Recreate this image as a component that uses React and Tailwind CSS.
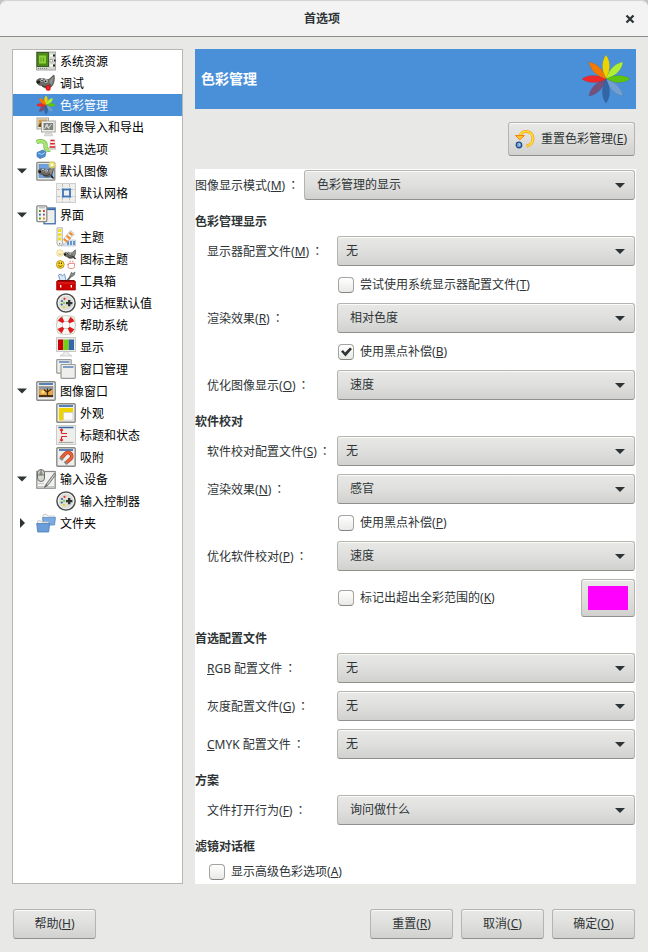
import React from "react";

/* ---------- icons ---------- */

const PETALS = [
  [0, "#edd400"],
  [45, "#b0ee34"],
  [90, "#5fc40c"],
  [135, "#729fcf"],
  [180, "#3465a4"],
  [225, "#75507b"],
  [270, "#ef2929"],
  [315, "#f57900"],
];

function Flower({ className, petal = "M24 24C18.500 14 20 5 24 0C28 5 29.500 14 24 24Z" }) {
  return (
    <svg viewBox="0 0 48 48" className={className} aria-hidden="true">
      {PETALS.map(([angle, fill]) => (
        <path key={angle} d={petal} fill={fill} stroke="#000" strokeOpacity=".12" strokeWidth=".6" transform={`rotate(${angle} 24 24)`} />
      ))}
    </svg>
  );
}

function Wilber() {
  return (
    <g>
      <path d="M.5 8C1.500 5.500 3.500 6 4.500 5.500C5.500 6.500 6.500 6 7.500 5.500C9.500 7 12.500 7 14 5.500C15.500 4 16.500 3 18 2C19 6 18 11.500 15 14C12 16 8 15.500 5.500 12.500C3 12.500 .5 11 .5 8Z" fill="#6a6963" stroke="#3c3b37" strokeWidth=".6" />
      <path d="M13 8L17.300 3.500C18 6.500 17 10 15 12.500Z" fill="#8f8e88" />
      <path d="M6 12.500C9 14.500 12.500 13.500 14.500 11.500" fill="none" stroke="#33322f" strokeWidth="1" />
      <ellipse cx="2.400" cy="9" rx="1.800" ry="1.500" fill="#1c1c1a" />
      <circle cx="6" cy="7.300" r="1.600" fill="#fff" stroke="#444" strokeWidth=".4" />
      <circle cx="10" cy="8" r="1.900" fill="#fff" stroke="#444" strokeWidth=".4" />
      <circle cx="6" cy="7.500" r=".8" fill="#111" />
      <circle cx="9.800" cy="8.200" r=".9" fill="#111" />
    </g>
  );
}

function Controller() {
  return (
    <g>
      <circle cx="10" cy="10" r="9.100" fill="#deded9" stroke="#4a4d4e" strokeWidth="1.500" />
      <circle cx="10" cy="10" r="7.800" fill="none" stroke="#f4f4f2" strokeWidth=".8" />
      <path d="M12 7h2.400v2h2v2.300h-2v2H12v-2h-2V9h2Z" fill="#2e3436" />
      <circle cx="8.500" cy="5.800" r="1.100" fill="#ef2929" />
      <circle cx="6" cy="8" r="1.100" fill="#3465a4" />
      <circle cx="8" cy="10" r="1.100" fill="#73d216" />
      <circle cx="5.700" cy="11.500" r="1.100" fill="#3465a4" />
      <circle cx="8" cy="14" r="1.100" fill="#edd400" />
    </g>
  );
}

function Frame({ children }) {
  return (
    <g>
      <rect x=".8" y=".8" width="18.400" height="18.400" rx="1" fill="#eeeeec" stroke="#888a85" strokeWidth="1.400" />
      <path d="M3 3h14" stroke="#3465a4" strokeWidth="1.600" />
      {children}
    </g>
  );
}

const ICONS = {
  chip: (
    <g>
      <rect x=".5" y="1" width="19" height="18" fill="#d3d7cf" stroke="#a5a8a1" />
      <rect x="1" y="1.500" width="11.500" height="14" fill="#4e8a1a" stroke="#3b5a28" />
      <rect x="3" y="4.500" width="7" height="8" fill="#8bcf3c" />
      <path d="M5 6.500v4M7.500 6.500v4" stroke="#4e8a1a" strokeWidth=".8" />
      <path d="M2 17.500h10" stroke="#7d807a" strokeDasharray="1 1" />
      <rect x="14" y="8.500" width="2.500" height="2.500" fill="#fff" stroke="#777" strokeWidth=".5" />
      <path d="M17 4.500h2M17 14.500h2M18 9.500h1.500" stroke="#222" strokeWidth="2" />
      <path d="M14 4.500h3M14 14.500h3" stroke="#fff" strokeWidth="2" />
    </g>
  ),
  debug: (
    <g>
      <Wilber />
      <rect x="10.300" y="12.500" width="3.800" height="4.800" rx="1.200" fill="#ef2929" stroke="#c00" strokeWidth=".8" />
    </g>
  ),
  importExport: (
    <g>
      <rect x="1" y="1" width="11.500" height="11" fill="#e9e7e2" stroke="#a5a6a0" />
      <rect x="2.500" y="2.500" width="8.500" height="7.500" fill="#e09a33" />
      <path d="M2.500 8l3-3 3 2 2-1v4h-8Z" fill="#6b4a15" />
      <rect x="5.500" y="4" width="13.700" height="11" fill="#eeeeec" stroke="#a5a6a0" />
      <rect x="7.500" y="6" width="9.700" height="7" fill="#7e807b" />
      <path d="M8.500 12l2.500-5 1.500 4 3-4M9.500 8.500l4 3.500" stroke="#e8e8e6" strokeWidth=".9" fill="none" />
      <path d="M10 15.800h5l2 3H8Z" fill="#dfe0dd" stroke="#b5b5b3" strokeWidth=".5" />
    </g>
  ),
  toolOptions: (
    <g>
      <path d="M.5 3C6 1 10 3 9.500 6.500S11 11.500 14 10.500" fill="none" stroke="#6dbb3c" strokeWidth="4.200" />
      <path d="M.5 3C6 1 10 3 9.500 6.500S11 11.500 14 10.500" fill="none" stroke="#abe57a" strokeWidth="2.800" />
      <path d="M1 13.500l6-2.500 3 2-1 4.500-5 2-3-2Z" fill="#4a8fd0" stroke="#3a70ad" strokeWidth=".7" />
      <path d="M2 14l4 1.500 3-2" stroke="#b4d5f5" strokeWidth=".9" fill="none" />
      <path d="M14.500 1h4l1 7.500h-6Z" fill="#f4f4f2" stroke="#bbb" strokeWidth=".5" />
      <path d="M14.500 1.500h4M14.200 4.700h4.600M13.700 8h5.600" stroke="#dd2222" strokeWidth="1.500" />
      <rect x="13" y="9" width="7" height="2" fill="#d3d7cf" />
    </g>
  ),
  defaultImage: (
    <g>
      <rect x=".8" y="1.300" width="18" height="17.900" rx="1" fill="#e4e4e1" stroke="#888a85" strokeWidth="1.300" />
      <rect x="3" y="3.500" width="14" height="13" fill="#6fa1df" stroke="#4a80c4" strokeWidth=".6" />
      <g transform="translate(1.800 3) scale(.85)"><Wilber /></g>
      <path d="M15 14.500l2.500 3" stroke="#222" strokeWidth="1.600" />
      <circle cx="16" cy="4" r="3.400" fill="#fce94f" opacity=".75" />
      <circle cx="16" cy="4" r="1.600" fill="#fffde0" />
    </g>
  ),
  grid: (
    <g>
      <rect x=".5" y=".5" width="19" height="19" fill="#eeeeec" stroke="#cfd0cd" />
      <path d="M6.500 1v5M13.500 1v5M6.500 14v5M13.500 14v5M1 6.500h5M1 13.500h5M14 6.500h5M14 13.500h5" stroke="#c0c1be" strokeWidth="1" strokeDasharray="3 1" />
      <rect x="7" y="6.500" width="7" height="7" fill="#eeeeec" stroke="#3e74b8" strokeWidth="1.800" />
      <path d="M6 5.500h1.500M13.500 5.500H15M6 14.500h1.500M13.500 14.500H15" stroke="#729fcf" strokeWidth="1" />
    </g>
  ),
  interface: (
    <g>
      <rect x="8" y="3" width="11.200" height="15.800" fill="#eeeeec" stroke="#3465a4" strokeWidth="1.200" />
      <path d="M8 4.300h11" stroke="#3465a4" strokeWidth="1.600" />
      <rect x=".8" y=".8" width="10" height="15.800" rx="1" fill="#f3f3f1" stroke="#888a85" strokeWidth="1.300" />
      <path d="M3 2.800h6" stroke="#aaa" />
      <path d="M3 6h1.800M3 13.500h1.800" stroke="#4e9a06" strokeWidth="1.800" />
      <path d="M7 6h1.800" stroke="#ef2929" strokeWidth="1.800" />
      <path d="M3 9.700h1.800" stroke="#3465a4" strokeWidth="1.800" />
      <path d="M7 9.700h1.800" stroke="#75507b" strokeWidth="1.800" />
      <path d="M7 13.500h1.800" stroke="#f57900" strokeWidth="1.800" />
    </g>
  ),
  theme: (
    <g>
      <path d="M9 13h10.500v6H5Z" fill="#dfe9f5" stroke="#a7b6c8" strokeWidth=".6" />
      <path d="M12 14v4M15 14v4M18 14v4" stroke="#4a80c4" strokeWidth="1.600" />
      <path d="M6 14L14.500 3.500l4 3.500L7.500 18Z" fill="#f4f4f2" stroke="#aaa" strokeWidth=".7" />
      <path d="M8 12l3.500 3M10.800 8.800l3.500 3M13.500 5.700l3 2.500" stroke="#f08a30" strokeWidth="2.200" />
      <path d="M1 .8h5.300v15.500a2.650 2.650 0 0 1-5.300 0Z" fill="#f6f6f3" stroke="#a0a19c" strokeWidth=".8" />
      <path d="M2 3.500h3.300M2 7.800h3.300M2 12h3.300" stroke="#f0dc20" strokeWidth="3" />
      <circle cx="3.600" cy="16.700" r=".8" fill="#777" />
    </g>
  ),
  iconTheme: (
    <g>
      <circle cx="4" cy="4" r="3.300" fill="#fdf3c4" stroke="#e2cf80" strokeWidth=".7" />
      <path d="M2.500 4.800q1.500 1.500 3 0" stroke="#b09030" strokeWidth=".6" fill="none" />
      <g transform="translate(7.500 -.5) scale(.66)"><Wilber /></g>
      <path d="M17 7.500l2.500 2.500" stroke="#333" strokeWidth="1.400" />
      <circle cx="4.300" cy="15.500" r="3.900" fill="#f7d733" stroke="#b08a10" strokeWidth=".8" />
      <path d="M2.300 16.500q2 2.200 4 0" stroke="#5c3d00" strokeWidth=".8" fill="none" />
      <path d="M3.200 13.500v1.500M5.500 13.500v1.500" stroke="#3a2600" strokeWidth=".9" />
      <path d="M12.500 14.500h6v3a2 2 0 0 1-2 2h-2.500a2 2 0 0 1-2-2Z" fill="#fff" stroke="#ec8378" strokeWidth=".9" />
      <path d="M14 13.500q-1-1 1-1.500M17 13.500q1-1-1-1.500M11 15.500h1.500" stroke="#ec8378" strokeWidth=".9" fill="none" />
    </g>
  ),
  toolbox: (
    <g>
      <path d="M4 9.500L2.500 4l2.300-1 1.500 2L8.500 3l1.500 6.500Z" fill="#dbe7f4" stroke="#5a88c0" strokeWidth=".8" />
      <path d="M11.500 9.500l4.500-6" stroke="#666865" strokeWidth="2" />
      <path d="M14 4.500l1.500-3.500 1 1.500 2.500-1.500-.5 3-3 2Z" fill="#888a85" stroke="#555" strokeWidth=".5" />
      <path d="M.6 10.500l1-1h16.800l1 1V19H.6Z" fill="#cc0000" stroke="#a00000" strokeWidth=".7" />
      <path d="M2 9.800h16" stroke="#5a0000" strokeWidth=".9" />
      <path d="M4.700 14v2.500M15.300 14v2.500" stroke="#fff" strokeWidth="1.400" />
      <path d="M2 12h16" stroke="#e83030" strokeWidth="1" />
    </g>
  ),
  controller: <Controller />,
  help: (
    <g>
      <rect x="1" y="1" width="18" height="18" rx="4" fill="none" stroke="#cfc6a8" strokeWidth=".9" />
      <circle cx="10" cy="10" r="6.600" fill="none" stroke="#a5a6a2" strokeWidth="6" />
      <circle cx="10" cy="10" r="6.600" fill="none" stroke="#f6f6f4" strokeWidth="5.200" />
      <circle cx="10" cy="10" r="6.600" fill="none" stroke="#e01b1b" strokeWidth="5.200" strokeDasharray="4.200 6.167" strokeDashoffset="-3.080" />
    </g>
  ),
  display: (
    <g>
      <rect x=".6" y=".6" width="18.800" height="13.800" fill="#eeeeec" stroke="#c4c5c2" />
      <path d="M2 2.500h5.300v10.500H2Z" fill="#cc0000" />
      <path d="M7.300 2.500h5.400v10.500H7.300Z" fill="#73d216" />
      <path d="M12.700 2.500H18v10.500h-5.300Z" fill="#3465a4" />
      <path d="M8 14.500h4v2l4 2.500H4l4-2.500Z" fill="#eeeeec" stroke="#c0c0be" strokeWidth=".7" />
    </g>
  ),
  windows: (
    <g>
      <rect x=".7" y=".7" width="14.500" height="13.500" rx=".8" fill="#eeeeec" stroke="#9a9c97" strokeWidth="1.200" />
      <path d="M3 3h10.500" stroke="#3f70b0" strokeWidth="1.300" />
      <rect x="5" y="5.500" width="14.300" height="13.800" rx=".8" fill="#eeeeec" stroke="#9a9c97" strokeWidth="1.200" />
      <path d="M7 8h10.500" stroke="#3f70b0" strokeWidth="1.300" />
    </g>
  ),
  imageWindow: (
    <Frame>
      <rect x="3" y="5.500" width="14" height="10.500" fill="#eaa944" stroke="#777" strokeWidth=".5" />
      <path d="M3.300 5.800h13.400v2.700H3.300Z" fill="#8a97a8" />
      <circle cx="7" cy="11" r="1.600" fill="#ffe680" />
      <path d="M3 16v-2h14v2Z" fill="#4a3415" />
      <path d="M11.500 14.500V10M11.500 11.500L8 8.500M11.500 11l4-3M11.500 10V7.500" fill="none" stroke="#3a2a10" strokeWidth="1.200" />
    </Frame>
  ),
  appearance: (
    <Frame>
      <path d="M3 5h14v4.500H7.500v8H3Z" fill="#edd400" />
      <path d="M7.500 9.500H17v7.700H7.500Z" fill="#fbfbfa" stroke="#c8cac5" strokeWidth=".7" />
    </Frame>
  ),
  title: (
    <g>
      <rect x=".5" y=".5" width="19" height="19" fill="#eeeeec" stroke="#cbccc9" />
      <path d="M2.500 2.500h15" stroke="#3465a4" strokeWidth="1.500" />
      <path d="M2.500 17.500h15" stroke="#a8aaa5" strokeWidth="1.200" />
      <path d="M5.500 8.500V4.500M4 5.500l1.500-1.500L7 5.500M5.500 8.500H11M5.500 11.500v4M4 14.500l1.500 1.500L7 14.500M5.500 11.500H11" stroke="#e02222" strokeWidth="1.200" fill="none" />
    </g>
  ),
  snap: (
    <Frame>
      <path d="M5 11.500l4-4.500a3.700 3.700 0 0 1 6 4.500l-5 4.500" fill="none" stroke="#b23a1c" strokeWidth="3.600" />
      <path d="M5 11.500l4-4.500a3.700 3.700 0 0 1 6 4.500l-5 4.500" fill="none" stroke="#e8603c" strokeWidth="2.500" />
      <path d="M3.800 10.700l3 2.500M8.500 14.500l2.700 2.700" stroke="#888a85" strokeWidth="2.200" />
    </Frame>
  ),
  input: (
    <g>
      <rect x=".8" y="2.500" width="18.400" height="16.700" fill="#f1f1ef" stroke="#888a85" strokeWidth="1.200" />
      <path d="M2 17.500h16M2 14.500h6" stroke="#c5c7c2" />
      <rect x="1.500" y=".5" width="7" height="12" rx="3.500" fill="#d3d7cf" stroke="#6a6c68" />
      <path d="M3 4q2-3.500 4 0v2H3Z" fill="#a7aaa4" />
      <path d="M5 1v5M1.800 6h6.400" stroke="#6a6c68" strokeWidth=".9" />
      <path d="M18.500 4L11 14l-2.500 4.500 4-3L19.500 6Z" fill="#c9cac7" stroke="#6a6c68" strokeWidth=".9" />
      <path d="M8 18.500l2-3.500 2 1.500Z" fill="#6a6c68" />
    </g>
  ),
  folders: (
    <g>
      <path d="M7 11V2l3-1 2 2h6.500v8Z" fill="#f3f3f1" stroke="#b9bab7" strokeWidth=".7" />
      <path d="M6.500 4.500H19.500l-1 7.500H7.500Z" fill="#7dabe0" stroke="#5a8cc6" strokeWidth=".8" />
      <path d="M1.500 16V8l3-.5 1.500 1.500h6.500v7Z" fill="#f3f3f1" stroke="#b9bab7" strokeWidth=".7" />
      <path d="M.7 10.500h13l-1 8.500H1.700Z" fill="#6b9ed8" stroke="#4a7db8" strokeWidth=".8" />
    </g>
  ),
};

function RowIcon({ name }) {
  if (name === "flower")
    return <Flower className="size-5 shrink-0" petal="M24 24C17 14 20 5 24 1C28 5 31 14 24 24Z" />;
  return (
    <svg viewBox="0 0 20 20" className="size-5 shrink-0" aria-hidden="true">
      {ICONS[name]}
    </svg>
  );
}

/* ---------- sidebar ---------- */

const TREE = [
  ["系统资源", "chip"],
  ["调试", "debug"],
  ["色彩管理", "flower", { selected: true }],
  ["图像导入和导出", "importExport"],
  ["工具选项", "toolOptions"],
  ["默认图像", "defaultImage", { open: true }],
  ["默认网格", "grid", { child: true }],
  ["界面", "interface", { open: true }],
  ["主题", "theme", { child: true }],
  ["图标主题", "iconTheme", { child: true }],
  ["工具箱", "toolbox", { child: true }],
  ["对话框默认值", "controller", { child: true }],
  ["帮助系统", "help", { child: true }],
  ["显示", "display", { child: true }],
  ["窗口管理", "windows", { child: true }],
  ["图像窗口", "imageWindow", { open: true }],
  ["外观", "appearance", { child: true }],
  ["标题和状态", "title", { child: true }],
  ["吸附", "snap", { child: true }],
  ["输入设备", "input", { open: true }],
  ["输入控制器", "controller", { child: true }],
  ["文件夹", "folders", { open: false }],
];

function TreeRow({ label, icon, child, open, selected }) {
  return (
    <li
      role="treeitem"
      aria-level={child ? 2 : 1}
      aria-expanded={open}
      aria-selected={!!selected}
      className={`flex h-[22px] items-center ${selected ? "bg-[#4a90d9] text-white" : "text-black"}`}
    >
      <span className={`flex shrink-0 items-center pl-1 ${child ? "w-[43px]" : "w-[23px]"}`}>
        {open !== undefined && (
          <svg viewBox="0 0 10 10" className="size-[10px]" aria-hidden="true">
            <path d={open ? "M0 2.500H10L5 7.500Z" : "M3 0V10L8 5Z"} fill="#2e3436" />
          </svg>
        )}
      </span>
      <RowIcon name={icon} />
      <span className="pt-[2px] pl-1 whitespace-nowrap">{label}</span>
    </li>
  );
}

/* ---------- form pieces ---------- */

const BEVEL =
  "rounded-[3px] border border-[#b4b4b0] border-b-[#8f8f8b] bg-linear-to-b from-[#e8e8e6] via-[#dfdfdd] to-[#d1d1cf] text-[#2e3436] shadow-[inset_0_1px_0_#fbfbfa]";

function Mnemonic({ text, letter }) {
  return (
    <>
      {text}(<u className="underline-offset-1">{letter}</u>)
    </>
  );
}

const Colon = () => <span className="pl-[2px] font-['Noto_Sans_CJK_TC',sans-serif]">：</span>;

function Select({ id, value, wide }) {
  return (
    <div className="relative min-w-0 flex-1">
      <select
        id={id}
        defaultValue={value}
        className={`block h-[30px] w-full appearance-none pr-8 ${wide ? "pl-3" : "pl-2"} ${BEVEL}`}
      >
        <option>{value}</option>
      </select>
      <svg viewBox="0 0 10 5" className="pointer-events-none absolute top-[13px] right-[10px] h-[5px] w-[10px]" aria-hidden="true">
        <path d="M0 0H10L5 5Z" fill="#2e3436" />
      </svg>
    </div>
  );
}

function Field({ id, label, value, wide }) {
  return (
    <div className="flex items-center pl-3">
      <label htmlFor={id} className="w-[130px] shrink-0 whitespace-nowrap">
        {label}
        <Colon />
      </label>
      <Select id={id} value={value} wide={wide} />
    </div>
  );
}

function Check({ id, checked, children }) {
  return (
    <span className="flex h-[21px] items-center gap-[6px]">
      <span className="relative size-4 shrink-0">
        <input
          id={id}
          type="checkbox"
          defaultChecked={checked}
          className="peer block size-4 appearance-none rounded-[4px] border border-[#a3a39f] border-b-[#858581] bg-linear-to-b from-white to-[#e9e9e7]"
        />
        <svg viewBox="0 0 16 16" className="pointer-events-none absolute inset-0 hidden size-4 peer-checked:block" aria-hidden="true">
          <path d="M3 7.500L5 6L7 8.500L12 3.500L14 5L7.500 12.500Z" fill="#2e3436" />
        </svg>
      </span>
      <label htmlFor={id} className="whitespace-nowrap">
        {children}
      </label>
    </span>
  );
}

function Section({ title, children }) {
  return (
    <section className="pt-3">
      <h2 className="mb-[6px] h-[18px] font-bold leading-5">{title}</h2>
      <div className="flex flex-col gap-2">{children}</div>
    </section>
  );
}

function DialogButton({ text, letter }) {
  return (
    <button type="button" className={`h-[30px] w-[83px] ${BEVEL}`}>
      <Mnemonic text={text} letter={letter} />
    </button>
  );
}

/* ---------- dialog ---------- */

export default function App() {
  return (
    <div className="bg-[#c4c4c2]">
      <div className="flex min-h-screen flex-col rounded-t-[7px] bg-[#e8e8e6] font-['Noto_Sans','Noto_Sans_CJK_SC',sans-serif] text-xs text-[#2e3436]">
        <header className="flex h-[37px] shrink-0 items-center rounded-t-[7px] border-t border-b border-t-[#d4d4d2] border-b-[#8e8e8a] bg-[#f3f3f3] pr-3 pl-3">
          <h1 className="flex-1 pl-2 text-center font-bold">首选项</h1>
          <button type="button" aria-label="关闭" className="flex w-3 items-center justify-center">
            <svg viewBox="0 0 10 10" className="size-[10px]" aria-hidden="true">
              <path d="M1.500 1.500L8.500 8.500M8.500 1.500L1.500 8.500" stroke="#2e3436" strokeWidth="2.300" />
            </svg>
          </button>
        </header>

        <div className="flex flex-1 gap-3 px-3 pt-3">
          <ul role="tree" aria-label="首选项" className="w-[171px] shrink-0 border border-[#b6b6b3] bg-white">
            {TREE.map(([label, icon, opts]) => (
              <TreeRow key={label} label={label} icon={icon} {...opts} />
            ))}
          </ul>

          <main className="flex min-w-0 flex-1 flex-col gap-[13px]">
            <div className="flex h-[60px] items-center justify-between bg-[#4a90d9] px-[6px] text-white">
              <h2 className="text-sm font-bold">色彩管理</h2>
              <Flower className="size-12" />
            </div>

            <div className="flex justify-end pr-px">
              <button type="button" className={`flex h-[34px] items-center gap-[6px] px-[6px] ${BEVEL}`}>
                <svg viewBox="0 0 20 20" className="size-5" aria-hidden="true">
                  <path d="M4.500 8C5.500 3.500 9 2.300 11.500 2.500C15 2.800 18 5.500 18 9.500C18 13.500 15 16.500 11.500 17" fill="none" stroke="#f59a20" strokeWidth="3" />
                  <path d="M4.500 8C5.500 3.500 9 2.300 11.500 2.500C15 2.800 18 5.500 18 9.500C18 13.500 15 16.500 11.500 17" fill="none" stroke="#fce02f" strokeWidth="1.700" />
                  <path d="M.5 6.500H9.500L4.800 10.800Z" fill="#fcc52f" stroke="#f57900" strokeWidth=".9" />
                  <circle cx="4" cy="16" r="2.800" fill="#6c97d0" stroke="#204a87" strokeWidth="1.200" />
                  <path d="M3 15q1-.8 1.800 0t-.8 1.400v.6" fill="none" stroke="#dce8f5" strokeWidth=".7" />
                </svg>
                <span className="pr-px"><Mnemonic text="重置色彩管理" letter="E" /></span>
              </button>
            </div>

            <form className="flex-1 bg-white pt-px pr-px pb-[2px]">
              <div className="flex items-center">
                <label htmlFor="mode" className="w-[109px] shrink-0 whitespace-nowrap">
                  <Mnemonic text="图像显示模式" letter="M" />
                  <Colon />
                </label>
                <Select id="mode" value="色彩管理的显示" wide />
              </div>

              <Section title="色彩管理显示">
                <Field id="monitor" label={<Mnemonic text="显示器配置文件" letter="M" />} value="无" />
                <div className="pl-[143px]">
                  <Check id="system"><Mnemonic text="尝试使用系统显示器配置文件" letter="T" /></Check>
                </div>
                <Field id="intent" label={<Mnemonic text="渲染效果" letter="R" />} value="相对色度" wide />
                <div className="pl-[143px]">
                  <Check id="bpc" checked><Mnemonic text="使用黑点补偿" letter="B" /></Check>
                </div>
                <Field id="optimize" label={<Mnemonic text="优化图像显示" letter="O" />} value="速度" wide />
              </Section>

              <Section title="软件校对">
                <Field id="proof" label={<Mnemonic text="软件校对配置文件" letter="S" />} value="无" />
                <Field id="proof-intent" label={<Mnemonic text="渲染效果" letter="N" />} value="感官" wide />
                <div className="pl-[143px]">
                  <Check id="proof-bpc"><Mnemonic text="使用黑点补偿" letter="P" /></Check>
                </div>
                <Field id="proof-optimize" label={<Mnemonic text="优化软件校对" letter="P" />} value="速度" wide />
                <div className="flex items-center justify-between pl-[143px]">
                  <Check id="gamut"><Mnemonic text="标记出超出全彩范围的" letter="K" /></Check>
                  <button type="button" aria-label="选择颜色" className={`flex h-[38px] w-[54px] items-center justify-center ${BEVEL}`}>
                    <span className="h-6 w-10 bg-[#ff00ff]" />
                  </button>
                </div>
              </Section>

              <Section title="首选配置文件">
                <Field id="rgb" label={<><u className="underline-offset-1">R</u>GB 配置文件</>} value="无" />
                <Field id="gray" label={<Mnemonic text="灰度配置文件" letter="G" />} value="无" />
                <Field id="cmyk" label={<><u className="underline-offset-1">C</u>MYK 配置文件</>} value="无" />
              </Section>

              <Section title="方案">
                <Field id="open" label={<Mnemonic text="文件打开行为" letter="F" />} value="询问做什么" wide />
              </Section>

              <Section title="滤镜对话框">
                <div className="pl-[14px]">
                  <Check id="advanced"><Mnemonic text="显示高级色彩选项" letter="A" /></Check>
                </div>
              </Section>
            </form>
          </main>
        </div>

        <footer className="flex gap-2 px-[13px] pt-[25px] pb-[13px]">
          <div className="flex-1"><DialogButton text="帮助" letter="H" /></div>
          <DialogButton text="重置" letter="R" />
          <DialogButton text="取消" letter="C" />
          <DialogButton text="确定" letter="O" />
        </footer>
      </div>
    </div>
  );
}
